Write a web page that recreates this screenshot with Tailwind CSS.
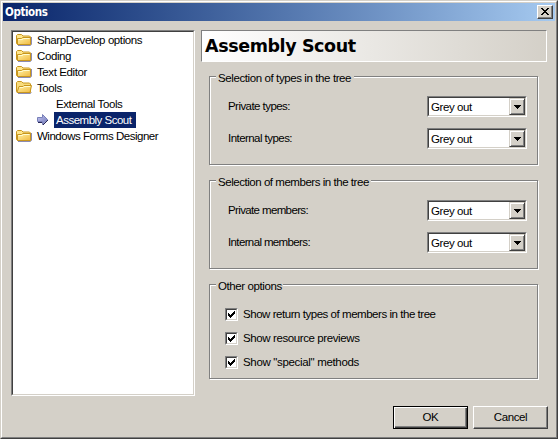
<!DOCTYPE html>
<html lang="en">
<head>
<meta charset="utf-8">
<title>Options</title>
<script src="https://cdn.jsdelivr.net/npm/@tailwindcss/browser@4"></script>
</head>
<body class="overflow-hidden bg-[#d4d0c8]">
<svg class="absolute size-0">
  <defs>
    <linearGradient id="fold" x1="0" y1="0" x2="1" y2="1"><stop offset="0" stop-color="#fff3a8"/><stop offset="1" stop-color="#f1b93f"/></linearGradient>
    <linearGradient id="arr" x1="0" y1="0" x2="1" y2="1"><stop offset="0" stop-color="#c8c8f4"/><stop offset="1" stop-color="#7078b8"/></linearGradient>
    <symbol id="folder" viewBox="0 0 16 16">
      <path d="M2 13.500h12.500l1-1V5" fill="none" stroke="#8c8cb4"/>
      <path d="M.5 11.500V3.500l1-1h4l1.500 1.500h6.500l1 1v7.500h-13z" fill="#ffe68c" stroke="#c8961e"/>
      <path d="M1.500 12.500v-6h4l1-1h8v7z" fill="url(#fold)" stroke="#c8961e"/>
      <path d="M2.500 7.500h4l1-1h6" fill="none" stroke="#fffbd0"/>
    </symbol>
    <symbol id="folder-open" viewBox="0 0 16 16">
      <path d="M2 13.500h12.500l1-1" fill="none" stroke="#8c8cb4"/>
      <path d="M.5 11.500V2.500l1-1h4l1.500 1.500h6.500l1 1v8.500h-13z" fill="#f8dc7c" stroke="#c8961e"/>
      <path d="M1 12.500l2-6h4l1-1h7.500l-1.500 7z" fill="url(#fold)" stroke="#c8961e"/>
      <path d="M3.700 7.500h3.500l1-1h6" fill="none" stroke="#fffbd0"/>
    </symbol>
    <symbol id="arrow" viewBox="0 0 12 12">
      <path d="M1 8.500h5V11l5-5" fill="none" stroke="#28285a"/>
      <path d="M.5 3.500h5v-3L10.500 5.500l-5 4.500v-2.500h-5z" fill="url(#arr)" stroke="#7880b8"/>
    </symbol>
    <symbol id="down" viewBox="0 0 7 4"><path d="M0 0h7v1H6v1H5v1H4v1H3V3H2V2H1V1H0z"/></symbol>
    <symbol id="check" viewBox="0 0 7 7"><path d="M6 0h1v3H6v1H5v1H4v1H3v1H2V6H1V5H0V2h1v1h1v1h1V3h1V2h1V1h1z"/></symbol>
    <symbol id="close" viewBox="0 0 8 7"><path d="M0 0h2v1h1v1h2V1h1V0h2v1H7v1H6v1H5v1h1v1h1v1h1v1H6V6H5V5H3v1H2v1H0V6h1V5h1V4h1V3H2V2H1V1H0z"/></symbol>
  </defs>
</svg>
<div class="h-[439px] w-[558px] border border-t-[#d4d0c8] border-l-[#d4d0c8] border-r-[#404040] border-b-[#404040] font-['Liberation_Sans',sans-serif] text-[11.5px] leading-4 tracking-[-0.4px] whitespace-nowrap text-black [&_svg]:block">
<div class="h-full border border-t-white border-l-white border-r-[#808080] border-b-[#808080] p-px">
  <div class="flex h-[18px] items-center justify-between bg-linear-to-r from-[#0a246a] to-[#a6caf0] pr-0.5 pl-0.5">
    <span class="font-['DejaVu_Sans_Condensed','DejaVu_Sans',sans-serif] text-[11.5px] font-bold tracking-[-0.4px] text-white">Options</span>
    <button class="flex h-3.5 w-4 items-start justify-center border border-t-white border-l-white border-r-[#404040] border-b-[#404040] bg-[#d4d0c8] pt-[2px] shadow-[inset_-1px_-1px_0_#808080]"><svg class="h-[7px] w-2"><use href="#close"/></svg></button>
  </div>
  <div class="flex gap-1.5 pt-[9px] pr-2 pl-2">
    <div class="h-[366px] w-[184px] border border-t-[#808080] border-l-[#808080] border-r-white border-b-white">
      <div class="h-full border border-t-[#404040] border-l-[#404040] border-r-[#d4d0c8] border-b-[#d4d0c8] bg-white pl-[3px]">
        <div class="flex h-4 items-center gap-[5px]"><svg class="size-4"><use href="#folder"/></svg><span>SharpDevelop options</span></div>
        <div class="flex h-4 items-center gap-[5px]"><svg class="size-4"><use href="#folder"/></svg><span>Coding</span></div>
        <div class="flex h-4 items-center gap-[5px]"><svg class="size-4"><use href="#folder"/></svg><span>Text Editor</span></div>
        <div class="flex h-4 items-center gap-[5px]"><svg class="size-4"><use href="#folder-open"/></svg><span>Tools</span></div>
        <div class="h-4 pl-10">External Tools</div>
        <div class="flex h-4 items-center pl-[21px]"><svg class="mr-[5px] size-3"><use href="#arrow"/></svg><span class="h-4 w-[82px] bg-[#0a246a] pl-0.5 tracking-[-0.5px] text-white">Assembly Scout</span></div>
        <div class="flex h-4 items-center gap-[5px]"><svg class="size-4"><use href="#folder"/></svg><span class="tracking-[-0.48px]">Windows Forms Designer</span></div>
      </div>
    </div>
    <div class="w-[346px]">
      <h1 class="flex h-8 items-center border border-t-[#808080] border-l-[#808080] border-r-white border-b-white bg-linear-to-r from-white to-[#d4d0c8] pl-[3px] font-['DejaVu_Sans',sans-serif] text-[17.5px] font-bold tracking-[-0.4px]">Assembly Scout</h1>
      <div class="flex flex-col gap-[15px] pt-3.5 pl-2">
        <section class="h-[89px] w-[329px] border border-[#808080] shadow-[1px_1px_0_white,inset_1px_1px_0_white]">
          <h2 class="-mt-[7px] ml-1.5 w-[138px] bg-[#d4d0c8] pl-0.5">Selection of types in the tree</h2>
          <div class="mt-2.5 flex flex-col gap-[11px] pr-[10px] pl-[18px]">
            <div class="flex h-[21px] items-center justify-between"><span class="pb-0.5 tracking-[-0.55px]">Private types:</span>
              <div class="h-[21px] w-[100px] border border-t-[#808080] border-l-[#808080] border-r-white border-b-white"><div class="flex h-full items-center justify-between border border-t-[#404040] border-l-[#404040] border-r-[#d4d0c8] border-b-[#d4d0c8] bg-white pl-0.5"><span class="pt-px">Grey out</span><span class="flex h-[17px] w-4 items-center justify-center border border-t-[#d4d0c8] border-l-[#d4d0c8] border-r-[#404040] border-b-[#404040] bg-[#d4d0c8] shadow-[inset_1px_1px_0_white,inset_-1px_-1px_0_#808080]"><svg class="h-1 w-[7px]"><use href="#down"/></svg></span></div></div></div>
            <div class="flex h-[21px] items-center justify-between"><span class="pb-0.5 tracking-[-0.55px]">Internal types:</span>
              <div class="h-[21px] w-[100px] border border-t-[#808080] border-l-[#808080] border-r-white border-b-white"><div class="flex h-full items-center justify-between border border-t-[#404040] border-l-[#404040] border-r-[#d4d0c8] border-b-[#d4d0c8] bg-white pl-0.5"><span class="pt-px">Grey out</span><span class="flex h-[17px] w-4 items-center justify-center border border-t-[#d4d0c8] border-l-[#d4d0c8] border-r-[#404040] border-b-[#404040] bg-[#d4d0c8] shadow-[inset_1px_1px_0_white,inset_-1px_-1px_0_#808080]"><svg class="h-1 w-[7px]"><use href="#down"/></svg></span></div></div></div>
          </div>
        </section>
        <section class="h-[89px] w-[329px] border border-[#808080] shadow-[1px_1px_0_white,inset_1px_1px_0_white]">
          <h2 class="-mt-[7px] ml-1.5 w-[155px] bg-[#d4d0c8] pl-0.5 tracking-[-0.46px]">Selection of members in the tree</h2>
          <div class="mt-2.5 flex flex-col gap-[11px] pr-[10px] pl-[18px]">
            <div class="flex h-[21px] items-center justify-between"><span class="pb-0.5 tracking-[-0.63px]">Private members:</span>
              <div class="h-[21px] w-[100px] border border-t-[#808080] border-l-[#808080] border-r-white border-b-white"><div class="flex h-full items-center justify-between border border-t-[#404040] border-l-[#404040] border-r-[#d4d0c8] border-b-[#d4d0c8] bg-white pl-0.5"><span class="pt-px">Grey out</span><span class="flex h-[17px] w-4 items-center justify-center border border-t-[#d4d0c8] border-l-[#d4d0c8] border-r-[#404040] border-b-[#404040] bg-[#d4d0c8] shadow-[inset_1px_1px_0_white,inset_-1px_-1px_0_#808080]"><svg class="h-1 w-[7px]"><use href="#down"/></svg></span></div></div></div>
            <div class="flex h-[21px] items-center justify-between"><span class="pb-0.5 tracking-[-0.63px]">Internal members:</span>
              <div class="h-[21px] w-[100px] border border-t-[#808080] border-l-[#808080] border-r-white border-b-white"><div class="flex h-full items-center justify-between border border-t-[#404040] border-l-[#404040] border-r-[#d4d0c8] border-b-[#d4d0c8] bg-white pl-0.5"><span class="pt-px">Grey out</span><span class="flex h-[17px] w-4 items-center justify-center border border-t-[#d4d0c8] border-l-[#d4d0c8] border-r-[#404040] border-b-[#404040] bg-[#d4d0c8] shadow-[inset_1px_1px_0_white,inset_-1px_-1px_0_#808080]"><svg class="h-1 w-[7px]"><use href="#down"/></svg></span></div></div></div>
          </div>
        </section>
        <section class="h-[95px] w-[329px] border border-[#808080] shadow-[1px_1px_0_white,inset_1px_1px_0_white]">
          <h2 class="-mt-[7px] ml-1.5 w-[67px] bg-[#d4d0c8] pl-0.5">Other options</h2>
          <div class="mt-3 flex flex-col gap-2 pl-[15px]">
            <div class="flex h-4 items-center gap-[5px]"><span class="size-[13px] border border-t-[#808080] border-l-[#808080] border-r-white border-b-white"><span class="block h-full border border-t-[#404040] border-l-[#404040] border-r-[#d4d0c8] border-b-[#d4d0c8] bg-white p-px"><svg class="size-[7px]"><use href="#check"/></svg></span></span><span class="tracking-[-0.46px]">Show return types of members in the tree</span></div>
            <div class="flex h-4 items-center gap-[5px]"><span class="size-[13px] border border-t-[#808080] border-l-[#808080] border-r-white border-b-white"><span class="block h-full border border-t-[#404040] border-l-[#404040] border-r-[#d4d0c8] border-b-[#d4d0c8] bg-white p-px"><svg class="size-[7px]"><use href="#check"/></svg></span></span><span>Show resource previews</span></div>
            <div class="flex h-4 items-center gap-[5px]"><span class="size-[13px] border border-t-[#808080] border-l-[#808080] border-r-white border-b-white"><span class="block h-full border border-t-[#404040] border-l-[#404040] border-r-[#d4d0c8] border-b-[#d4d0c8] bg-white p-px"><svg class="size-[7px]"><use href="#check"/></svg></span></span><span class="tracking-[-0.33px]">Show "special" methods</span></div>
          </div>
        </section>
      </div>
    </div>
  </div>
  <div class="flex justify-end gap-[5px] pt-2.5 pr-[7px]">
    <button class="h-[23px] w-[75px] border border-black bg-[#d4d0c8] pb-0.5 shadow-[inset_1px_1px_0_white,inset_-1px_-1px_0_#404040,inset_-2px_-2px_0_#808080]">OK</button>
    <button class="h-[23px] w-[75px] border border-t-white border-l-white border-r-[#404040] border-b-[#404040] bg-[#d4d0c8] pb-0.5 shadow-[inset_-1px_-1px_0_#808080]">Cancel</button>
  </div>
</div>
</div>
</body>
</html>
